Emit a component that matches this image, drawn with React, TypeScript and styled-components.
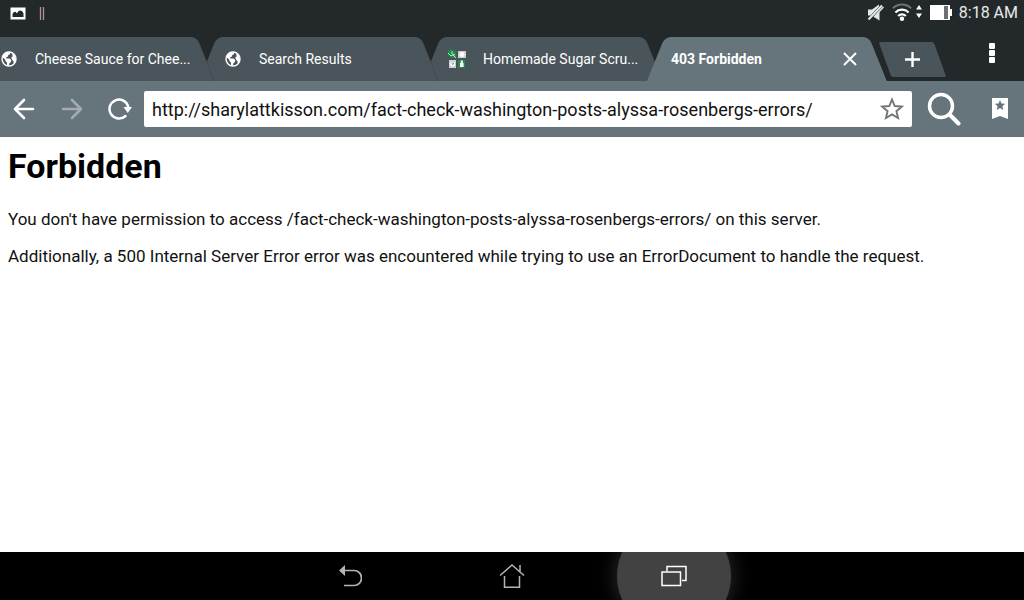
import React from "react";
import styled, { createGlobalStyle, css } from "styled-components";

const colors = {
  frame: "#23292b",
  tab: "#4a555b",
  tabEdge: "#3f494e",
  active: "#66747b",
  text: "#ffffff",
};

const GlobalStyle = createGlobalStyle`
  * { box-sizing: border-box; }
  body {
    margin: 0;
    background: #fff;
    font-family: Roboto, "Liberation Sans", sans-serif;
  }
`;

const Screen = styled.div`
  display: flex;
  flex-direction: column;
  min-height: 100vh;
  overflow: hidden;
`;

const StatusBar = styled.header`
  display: flex;
  justify-content: space-between;
  align-items: center;
  height: 26px;
  padding: 0 6px 0 10px;
  background: ${colors.frame};
  color: #e8eaea;
`;

const StatusGroup = styled.div<{ $gap: number }>`
  display: flex;
  align-items: center;
  gap: ${(p) => p.$gap}px;
`;

const Clock = styled.time`
  font-size: 16px;
  line-height: 20px;
`;

const TabStrip = styled.nav`
  display: flex;
  align-items: flex-end;
  height: 55px;
  background: ${colors.frame};
  overflow: hidden;
`;

const TabList = styled.div`
  display: flex;
  margin-left: -25px;
`;

const edge = css`
  content: "";
  position: absolute;
  z-index: -1;
  top: 0;
  bottom: 0;
`;

const TabItem = styled.div<{ $active?: boolean; $level: number }>`
  position: relative;
  isolation: isolate;
  z-index: ${(p) => p.$level};
  display: flex;
  align-items: center;
  flex: none;
  width: 240px;
  height: 44px;
  padding: 0 24px;
  color: ${colors.text};

  & + & {
    margin-left: -16px;
  }

  &::before {
    ${edge}
    left: 0;
    width: 50%;
    background: ${(p) => (p.$active ? colors.active : colors.tab)};
    border-radius: 6px 0 0 0;
    transform: skewX(-22deg);
    transform-origin: bottom;
  }

  &::after {
    ${edge}
    right: 0;
    width: 60%;
    background: ${(p) => (p.$active ? colors.active : colors.tab)};
    border-right: 1px solid ${(p) => (p.$active ? colors.active : colors.tabEdge)};
    border-radius: 0 6px 0 0;
    transform: skewX(22deg);
    transform-origin: bottom;
  }
`;

const TabButton = styled.button<{ $bold?: boolean }>`
  display: flex;
  align-items: center;
  gap: 16px;
  flex: 1;
  min-width: 0;
  height: 44px;
  padding: 0;
  border: 0;
  background: none;
  color: inherit;
  font: ${(p) => (p.$bold ? 700 : 400)} 14px/20px Roboto, "Liberation Sans", sans-serif;
  text-align: left;
`;

const TabGlyph = styled.span`
  display: flex;
  align-items: center;
  justify-content: center;
  flex: none;
  width: 20px;
`;

const TabTitle = styled.span`
  width: 156px;
  overflow: hidden;
  white-space: nowrap;
  text-overflow: ellipsis;
`;

const IconButton = styled.button<{ $width: number }>`
  display: flex;
  align-items: center;
  justify-content: center;
  flex: none;
  width: ${(p) => p.$width}px;
  height: 36px;
  padding: 0;
  border: 0;
  background: none;
  color: ${colors.text};
`;

const NewTab = styled(IconButton)`
  position: relative;
  isolation: isolate;
  height: 35px;
  margin: 0 0 4px -8px;

  &::before {
    ${edge}
    left: 0;
    right: 0;
    margin: 0 6px;
    background: ${colors.tab};
    border-radius: 2px;
    transform: skewX(20deg);
  }
`;

const MenuButton = styled(IconButton)`
  height: 55px;
  margin: 0 8px 0 auto;
`;

const Toolbar = styled.form`
  display: flex;
  align-items: center;
  height: 56px;
  background: ${colors.active};
`;

const AddressBox = styled.label`
  display: flex;
  align-items: center;
  flex: 1;
  min-width: 0;
  height: 36px;
  padding-left: 8px;
  border-radius: 2px;
  background: #fff;
`;

const AddressInput = styled.input`
  flex: 1;
  min-width: 0;
  height: 36px;
  padding: 0;
  border: 0;
  outline: 0;
  background: none;
  color: #111;
  font: 18px/24px Roboto, "Liberation Sans", sans-serif;
`;

const StarButton = styled(IconButton)`
  color: #737578;
`;

const Page = styled.main`
  flex: 1;
  padding: 8px;
  background: #fff;
  color: #111;
`;

const Heading = styled.h1`
  margin: 0 0 22px;
  color: #000;
  font-size: 34px;
  line-height: 42px;
`;

const Paragraph = styled.p`
  margin: 0 0 17px;
  font-size: 17px;
  line-height: 20px;
`;

const SystemBar = styled.footer`
  display: flex;
  justify-content: center;
  height: 48px;
  background: #000;
  overflow: hidden;
`;

const SystemButton = styled(IconButton)<{ $pressed?: boolean }>`
  position: relative;
  isolation: isolate;
  height: 48px;
  color: ${(p) => (p.$pressed ? "#fff" : "#b4b4b4")};

  &::before {
    content: "";
    display: ${(p) => (p.$pressed ? "block" : "none")};
    position: absolute;
    z-index: -1;
    top: -33px;
    left: 24px;
    width: 114px;
    height: 114px;
    border-radius: 50%;
    background: #424242;
    box-shadow: 0 0 20px 1px #2a2a2a;
  }
`;

const GlobeIcon = () => (
  <svg width="16" height="16" viewBox="0 0 16 16" aria-hidden="true">
    <circle cx="8" cy="8" r="7" fill="none" stroke="#fff" strokeWidth="1.4" />
    <path fill="#fff" d="M1.4 5.2 4 1.8 7 .8 9.2 1.8 8.8 3.4 7.2 4 7 5.6 5.2 6.2 5.4 7.4 8.6 7.6 10.4 9.2 9.8 11 8.4 12.2 7.8 14.6 6 14.4 6 11.6 4.4 10 4.2 8.6 1.4 6.2ZM11.2 2.6 13.6 4.4 15 8 14.2 11.2 12.8 12.4 12.4 10 11 8.6 10.2 6.4 11.6 5.4Z" />
  </svg>
);

const RecipeIcon = () => (
  <svg width="20" height="20" viewBox="0 0 20 20" aria-hidden="true">
    <path fill="#1d8a45" d="M1 1 5 .5 9 3v6H6L1 6.500z" />
    <path d="m1 4 3 3 2-1 3 3M5 2v3l3 1" stroke="#c3e6cd" strokeWidth=".9" fill="none" />
    <path fill="#23894a" d="M11 11h7v8h-7z" />
    <path fill="#c9d0ce" d="M11 2h8v7h-8zM2 11h7v8H2z" />
    <circle cx="15" cy="5.500" r="2.500" fill="#fff" />
    <circle cx="5.500" cy="15" r="2.500" fill="#fff" />
    <path d="M4.500 14h2l-1 2" stroke="#71817b" strokeWidth=".9" fill="none" />
    <path fill="#fff" d="M13 14h.8v-2.500h2V14h.8v4H13z" />
  </svg>
);

const tabs = [
  { title: "Cheese Sauce for Cheesecake", shown: "Cheese Sauce for Chee...", icon: <GlobeIcon /> },
  { title: "Search Results", shown: "Search Results", icon: <GlobeIcon /> },
  { title: "Homemade Sugar Scrub", shown: "Homemade Sugar Scru...", icon: <RecipeIcon /> },
];

export default function App() {
  return (
    <Screen>
      <GlobalStyle />
      <StatusBar>
        <StatusGroup $gap={13}>
          <svg width="16" height="13" viewBox="0 0 16 13" aria-label="Picture">
            <rect x=".5" y=".5" width="15" height="12" fill="#fff" />
            <path fill={colors.frame} d="M2.5 10V7.2C3.6 4.4 5.4 3.6 7 6.6 8.4 2.8 11.8 2.4 13.5 6.4V10Z" />
          </svg>
          <svg width="6" height="13" viewBox="0 0 6 13" aria-hidden="true">
            <path d="M1.5 0v13M4.5 0v13" stroke="#b48f98" strokeWidth="1.3" />
          </svg>
        </StatusGroup>
        <StatusGroup $gap={7}>
          <svg width="18" height="18" viewBox="0 0 18 18" aria-label="Muted">
            <path fill="#e4e6e6" d="M1 5.500h4l7-5v2L3.500 11.500H1zM7 13l5.500-6v9.500z" />
            <path d="M1.500 15.500 15 1.500" stroke="#e4e6e6" strokeWidth="2" />
            <path d="m7 13 9.500-10" stroke="#e4e6e6" strokeWidth="1.4" />
          </svg>
          <svg width="31" height="20" viewBox="0 0 31 20" fill="none" aria-label="Wi-Fi">
            <path d="M.8 5.400a13 13 0 0 1 18.400 0" stroke="#6d7274" strokeWidth="2" />
            <path d="M3.400 9.400a9.300 9.300 0 0 1 13.200 0M6.200 13a5.400 5.400 0 0 1 7.600 0" stroke="#fff" strokeWidth="2.200" />
            <circle cx="10" cy="15.800" r="2.200" fill="#fff" />
            <path fill="#fff" d="M24 6.500 27 2l3 4.500ZM24 10.500 27 15l3-4.500Z" />
          </svg>
          <svg width="22" height="16" viewBox="0 0 22 16" aria-label="Battery">
            <path fill="#fff" d="M0 0h20v4h2v7h-2v4H0z" />
            <path fill="#6b7173" d="M14 1h4v13h-4z" />
          </svg>
          <Clock>8:18 AM</Clock>
        </StatusGroup>
      </StatusBar>

      <TabStrip aria-label="Tabs">
        <TabList>
          {tabs.map((tab, i) => (
            <TabItem key={tab.title} $level={tabs.length - i}>
              <TabButton type="button" title={tab.title}>
                <TabGlyph>{tab.icon}</TabGlyph>
                <TabTitle>{tab.shown}</TabTitle>
              </TabButton>
            </TabItem>
          ))}
          <TabItem $active $level={10}>
            <TabButton type="button" $bold aria-current="page">
              403 Forbidden
            </TabButton>
            <IconButton type="button" $width={26} aria-label="Close tab">
              <svg width="14" height="14" viewBox="0 0 14 14">
                <path d="M1 1 13 13M13 1 1 13" stroke="currentColor" strokeWidth="2" />
              </svg>
            </IconButton>
          </TabItem>
        </TabList>
        <NewTab type="button" $width={67} aria-label="New tab">
          <svg width="16" height="16" viewBox="0 0 16 16">
            <path d="M7.500 0v15M0 7.500h15" stroke="currentColor" strokeWidth="2.400" />
          </svg>
        </NewTab>
        <MenuButton type="button" $width={48} aria-label="Menu">
          <svg width="6" height="22" viewBox="0 0 6 22" fill="currentColor">
            <rect width="6" height="6" rx="1" />
            <rect y="7" width="6" height="6" rx="1" />
            <rect y="14" width="6" height="6" rx="1" />
          </svg>
        </MenuButton>
      </TabStrip>

      <Toolbar onSubmit={(e) => e.preventDefault()}>
        <IconButton type="button" $width={48} aria-label="Back">
          <svg width="22" height="22" viewBox="0 0 22 22" fill="none" stroke="currentColor" strokeWidth="2.6" strokeLinecap="round" strokeLinejoin="round">
            <path d="M11 2 2 11l9 9M2 11h18" />
          </svg>
        </IconButton>
        <IconButton type="button" $width={48} aria-label="Forward">
          <svg width="22" height="22" viewBox="0 0 22 22" fill="none" stroke="#a3abb0" strokeWidth="2.6" strokeLinecap="round" strokeLinejoin="round">
            <path d="m11 2 9 9-9 9M20 11H2" />
          </svg>
        </IconButton>
        <IconButton type="button" $width={48} aria-label="Reload">
          <svg width="24" height="22" viewBox="0 0 24 22">
            <path d="M17.500 18A9.500 9.500 0 1 1 20.300 9" fill="none" stroke="currentColor" strokeWidth="2.500" strokeLinecap="round" />
            <path fill="currentColor" d="M15.500 9H24l-4.200 6z" />
          </svg>
        </IconButton>
        <AddressBox>
          <AddressInput
            aria-label="Address"
            spellCheck={false}
            defaultValue="http://sharylattkisson.com/fact-check-washington-posts-alyssa-rosenbergs-errors/"
          />
          <StarButton type="button" $width={40} aria-label="Bookmark this page">
            <svg width="24" height="24" viewBox="0 0 24 24" fill="none" stroke="currentColor" strokeWidth="1.9">
              <path d="m12 2.500 2.700 6.500 7.100.6-5.400 4.600 1.700 6.900-6.100-3.700-6.100 3.700 1.700-6.900L2.200 9.600 9.300 9z" />
            </svg>
          </StarButton>
        </AddressBox>
        <IconButton type="submit" $width={64} aria-label="Search">
          <svg width="34" height="34" viewBox="0 0 34 34" fill="none" stroke="currentColor">
            <circle cx="14" cy="14" r="11.500" strokeWidth="3.500" />
            <path d="m22.500 22.500 9 9" strokeWidth="4" strokeLinecap="round" />
          </svg>
        </IconButton>
        <IconButton type="button" $width={48} aria-label="Bookmarks">
          <svg width="16" height="22" viewBox="0 0 16 22">
            <path fill="currentColor" d="M0 0h16v21l-8-3-8 3z" />
            <path fill={colors.active} d="m8 2 1.500 3.500 3.700.3-2.800 2.500.9 3.700L8 10l-3.300 2 .9-3.700-2.800-2.500 3.700-.3z" />
          </svg>
        </IconButton>
      </Toolbar>

      <Page>
        <Heading>Forbidden</Heading>
        <Paragraph>
          You don't have permission to access /fact-check-washington-posts-alyssa-rosenbergs-errors/ on this server.
        </Paragraph>
        <Paragraph>
          Additionally, a 500 Internal Server Error error was encountered while trying to use an ErrorDocument to handle the request.
        </Paragraph>
      </Page>

      <SystemBar>
        <SystemButton type="button" $width={162} aria-label="System back">
          <svg width="24" height="24" viewBox="0 0 24 24">
            <path fill="currentColor" d="M1 6.500 7 1v11z" />
            <path d="M6 6.500h10a7.500 7.500 0 0 1 0 15H6" fill="none" stroke="currentColor" strokeWidth="1.700" />
          </svg>
        </SystemButton>
        <SystemButton type="button" $width={162} aria-label="Home">
          <svg width="26" height="26" viewBox="0 0 26 26" fill="none" stroke="currentColor" strokeWidth="1.500">
            <path d="M1 12.500 13 2l12 10.500M5.500 13v11.200h15V13M21 9V2" />
          </svg>
        </SystemButton>
        <SystemButton type="button" $pressed $width={162} aria-label="Recent apps">
          <svg width="26" height="22" viewBox="0 0 26 22" fill="none" stroke="currentColor" strokeWidth="1.500">
            <path d="M1 7h18.500v13.500H1zM6 6V1.500h19v14h-4" />
          </svg>
        </SystemButton>
      </SystemBar>
    </Screen>
  );
}
